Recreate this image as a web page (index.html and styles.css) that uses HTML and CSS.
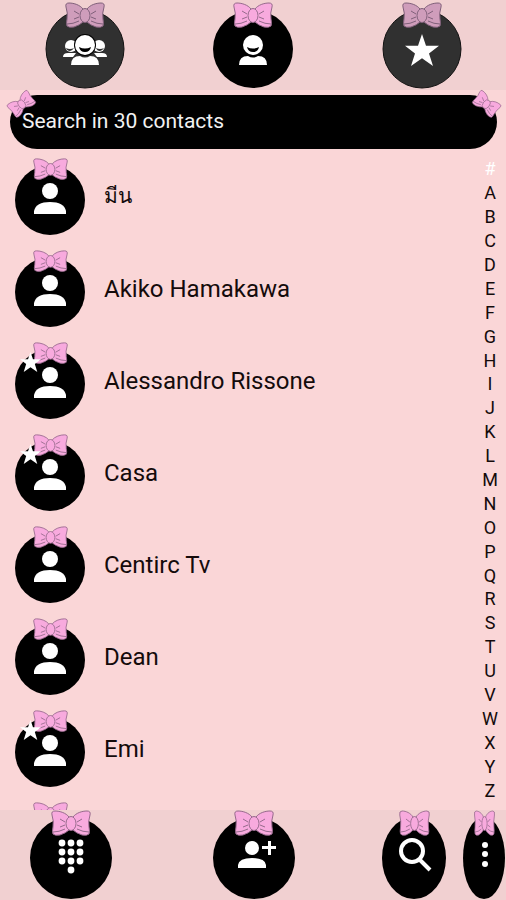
FILE: index.html
```html
<!DOCTYPE html>
<html lang="en">
<head>
<meta charset="utf-8">
<meta name="viewport" content="width=device-width, initial-scale=1">
<title>Contacts</title>
<link rel="stylesheet" href="styles.css">
</head>
<body>
<svg class="defs" aria-hidden="true">
  <symbol id="bow" viewBox="0 0 40 26" preserveAspectRatio="none">
    <g class="bow-shape">
      <path d="M18 7C15 3 9 1 4 1Q0 1 1 5Q3 11 2 17Q1 22 2 24Q4 26 9 25Q15 23 18 20Z"/>
      <path d="M22 7C25 3 31 1 36 1Q40 1 39 5Q37 11 38 17Q39 22 38 24Q36 26 31 25Q25 23 22 20Z"/>
      <ellipse cx="20" cy="13.500" rx="5" ry="7"/>
      <path class="fold" d="M14 12L9 9M14 15L9 17M26 12L31 9M26 15L31 17M2 22Q8 22 14 19M38 22Q32 22 26 19"/>
    </g>
  </symbol>
  <symbol id="star" viewBox="0 0 34 33" preserveAspectRatio="none">
    <path d="M17 0L21 12H34L24 20L28 33L17 25L6 33L10 20L0 12H13Z"/>
  </symbol>
  <symbol id="smiler" viewBox="0 0 80 88">
    <path d="M26 64Q26 55 35 55Q40 58 45 55Q54 55 54 64Z"/>
    <circle class="face-ring" cx="40" cy="44" r="11"/>
    <circle cx="40" cy="44" r="10"/>
    <path class="smile" d="M34 46Q40 49 46 46Q45 51 40 51Q35 51 34 46Z"/>
  </symbol>
  <symbol id="person" viewBox="0 0 72 80">
    <circle cx="36" cy="31" r="8"/>
    <path d="M20 54V51Q22 42 36 42Q50 42 52 51V54Z"/>
  </symbol>
  <symbol id="avatar" viewBox="0 0 72 80">
    <ellipse class="disc" cx="36" cy="40" rx="35" ry="35"/>
    <use href="#bow" x="19" y="-2" width="35" height="22"/>
    <use href="#person" width="72" height="80"/>
  </symbol>
</svg>

<nav class="tabs" aria-label="Views">
  <button class="tab tab-dim" type="button" aria-label="Groups">
    <svg class="tab-art" viewBox="0 0 80 88">
      <ellipse class="disc" cx="40" cy="48" rx="39" ry="39"/>
      <use href="#bow" x="20" y="1" width="40" height="26"/>
      <g>
        <circle cx="26" cy="45" r="6"/><path class="smile" d="M21 47Q25 49 29 47Q27 50 25 50Q22 50 21 47Z"/>
        <path d="M18 56Q18 52 23 52H31L28 56Z"/>
        <circle cx="54" cy="45" r="6"/><path class="smile" d="M51 47Q55 49 59 47Q57 50 55 50Q52 50 51 47Z"/>
        <path d="M62 56Q62 52 57 52H49L52 56Z"/>
      </g>
      <use href="#smiler" width="80" height="88"/>
    </svg>
  </button>
  <button class="tab" type="button" aria-label="Contacts">
    <svg class="tab-art" viewBox="0 0 80 88">
      <ellipse class="disc" cx="40" cy="48" rx="40" ry="39"/>
      <use href="#bow" x="20" y="1" width="40" height="26"/>
      <use href="#smiler" width="80" height="88"/>
    </svg>
  </button>
  <button class="tab tab-dim" type="button" aria-label="Favorites">
    <svg class="tab-art" viewBox="0 0 80 88">
      <ellipse class="disc" cx="40" cy="48" rx="39" ry="39"/>
      <use href="#bow" x="20" y="1" width="40" height="26"/>
      <use href="#star" x="23" y="33" width="34" height="32"/>
    </svg>
  </button>
</nav>

<div class="search">
  <input class="search-field" type="search" aria-label="Search contacts" placeholder="Search in 30 contacts">
  <svg class="corner-bow corner-left" viewBox="0 0 40 26" aria-hidden="true"><use href="#bow" width="40" height="26"/></svg>
  <svg class="corner-bow corner-right" viewBox="0 0 40 26" aria-hidden="true"><use href="#bow" width="40" height="26"/></svg>
</div>

<main class="content">
  <ul class="contacts">
    <li><a class="contact" href="#"><svg class="avatar" viewBox="0 0 72 80"><use href="#avatar"/></svg><span lang="th">มีน</span></a></li>
    <li><a class="contact" href="#"><svg class="avatar" viewBox="0 0 72 80"><use href="#avatar"/></svg><span>Akiko Hamakawa</span></a></li>
    <li><a class="contact" href="#"><svg class="avatar" viewBox="0 0 72 80"><use href="#avatar"/><use href="#star" x="6" y="8" width="21" height="20"/></svg><span>Alessandro Rissone</span></a></li>
    <li><a class="contact" href="#"><svg class="avatar" viewBox="0 0 72 80"><use href="#avatar"/><use href="#star" x="6" y="8" width="21" height="20"/></svg><span>Casa</span></a></li>
    <li><a class="contact" href="#"><svg class="avatar" viewBox="0 0 72 80"><use href="#avatar"/></svg><span>Centirc Tv</span></a></li>
    <li><a class="contact" href="#"><svg class="avatar" viewBox="0 0 72 80"><use href="#avatar"/></svg><span>Dean</span></a></li>
    <li><a class="contact" href="#"><svg class="avatar" viewBox="0 0 72 80"><use href="#avatar"/><use href="#star" x="6" y="8" width="21" height="20"/></svg><span>Emi</span></a></li>
    <li><a class="contact" href="#" aria-label="Next contact"><svg class="avatar" viewBox="0 0 72 80"><use href="#avatar"/></svg></a></li>
  </ul>
  <nav class="index" aria-label="Alphabet">
    <a class="current" href="#">#</a><a href="#">A</a><a href="#">B</a><a href="#">C</a><a href="#">D</a><a href="#">E</a><a href="#">F</a><a href="#">G</a><a href="#">H</a><a href="#">I</a><a href="#">J</a><a href="#">K</a><a href="#">L</a><a href="#">M</a><a href="#">N</a><a href="#">O</a><a href="#">P</a><a href="#">Q</a><a href="#">R</a><a href="#">S</a><a href="#">T</a><a href="#">U</a><a href="#">V</a><a href="#">W</a><a href="#">X</a><a href="#">Y</a><a href="#">Z</a>
  </nav>
</main>

<footer class="actions">
  <button class="action" type="button" aria-label="Dial pad">
    <svg class="action-art" viewBox="0 0 82 90">
      <ellipse class="disc" cx="41" cy="48" rx="41" ry="41"/>
      <use href="#bow" x="21" y="0" width="40" height="26"/>
      <g><circle cx="32" cy="33" r="3.4"/><circle cx="41" cy="33" r="3.4"/><circle cx="50" cy="33" r="3.4"/><circle cx="32" cy="42" r="3.4"/><circle cx="41" cy="42" r="3.4"/><circle cx="50" cy="42" r="3.4"/><circle cx="32" cy="51" r="3.4"/><circle cx="41" cy="51" r="3.4"/><circle cx="50" cy="51" r="3.4"/><circle cx="41" cy="60" r="3.4"/></g>
    </svg>
  </button>
  <button class="action" type="button" aria-label="Add contact">
    <svg class="action-art" viewBox="0 0 82 90">
      <ellipse class="disc" cx="41" cy="48" rx="41" ry="41"/>
      <use href="#bow" x="21" y="0" width="40" height="26"/>
      <circle cx="39" cy="38" r="7"/>
      <path d="M25 58V55Q26 48 39 48Q52 48 53 55V58Z"/>
      <path d="M55 31H58V36H63V39H58V45H55V39H49V36H55Z"/>
    </svg>
  </button>
  <button class="action" type="button" aria-label="Search">
    <svg class="action-art action-medium" viewBox="0 0 64 90">
      <ellipse class="disc" cx="32" cy="48" rx="32" ry="41"/>
      <use href="#bow" x="17" y="0" width="31" height="26"/>
      <g class="lens"><circle cx="30" cy="41" r="11"/><path d="M38 50L48 60"/></g>
    </svg>
  </button>
  <button class="action" type="button" aria-label="More options">
    <svg class="action-art action-small" viewBox="0 0 42 90">
      <ellipse class="disc" cx="21" cy="48" rx="21" ry="41"/>
      <use href="#bow" x="11" y="0" width="21" height="26"/>
      <circle cx="22" cy="35" r="3"/><circle cx="22" cy="44" r="3"/><circle cx="22" cy="54" r="3"/>
    </svg>
  </button>
</footer>
</body>
</html>
```
FILE: styles.css
```css
* { box-sizing: border-box; }

body {
  margin: 0;
  height: 100vh;
  display: flex;
  flex-direction: column;
  background: #fad6d7;
  color: #140b0b;
  font-family: Roboto, "Noto Sans", "Liberation Sans", sans-serif;
}

button {
  margin: 0;
  padding: 0;
  border: 0;
  background: none;
}

a { color: inherit; text-decoration: none; }
svg { display: block; fill: #fff; }

.defs { position: absolute; width: 0; height: 0; }
.disc { fill: #000; }
.smile { fill: #000; }
.face-ring { fill: #000; }
.bow-shape { fill: var(--bow, #f8aade); stroke: var(--bow-line, #966a8c); stroke-width: 1; }
.fold { fill: none; }

.tabs {
  flex: none;
  display: grid;
  grid-template-columns: repeat(3, 1fr);
  height: 90px;
  padding-left: 1px;
  background: #f1d0d1;
}
.tab { display: grid; place-items: center; }
.tab-art { width: 80px; height: 88px; }
.tab-dim { --bow: #cf9dbb; --bow-line: #80607a; }
.tab-dim .disc { fill: #303030; stroke: #111; }
.tab-dim .smile, .tab-dim .face-ring { fill: #303030; }

.search {
  flex: none;
  position: relative;
  padding: 5px 9px 5px 10px;
}
.search-field {
  display: block;
  width: 100%;
  height: 54px;
  padding: 0 12px 2px;
  border: 0;
  border-radius: 27px;
  background: #000;
  color: #f2f2f2;
  font: 21px Roboto, "Liberation Sans", sans-serif;
}
.search-field::placeholder { color: #f2f2f2; opacity: 1; }
.corner-bow { position: absolute; top: 5px; width: 27px; height: 18px; }
.corner-left { left: 8px; transform: rotate(-38deg); }
.corner-right { right: 6px; transform: rotate(38deg); }

.content {
  flex: 1;
  min-height: 0;
  display: flex;
  overflow: hidden;
}
.contacts {
  flex: 1;
  margin: 0;
  padding: 0;
  list-style: none;
}
.contact {
  display: flex;
  align-items: center;
  gap: 18px;
  height: 92px;
  padding: 0 14px;
  font-size: 24px;
}
.contact span { padding-bottom: 6px; }
.contact span:lang(th) { padding-bottom: 10px; font-size: 21px; }
.avatar { width: 72px; height: 80px; overflow: visible; }
#avatar { overflow: visible; }

.index {
  flex: none;
  display: flex;
  flex-direction: column;
  width: 32px;
  padding: 3px 0 8px;
  font-size: 18px;
  text-align: center;
}
.index a {
  flex: 1;
  display: grid;
  place-items: center;
  min-height: 0;
}
.index .current { color: #fff; }

.actions {
  flex: none;
  display: grid;
  grid-template-columns: 141fr 225fr 96fr 44fr;
  height: 90px;
  background: #f1d0d1;
}
.action { display: grid; place-items: center; }
.action-art { width: 82px; height: 90px; }
.action-medium { width: 64px; }
.action-small { width: 42px; }
.lens circle, .lens path { fill: none; stroke: #fff; stroke-width: 4; }
```
